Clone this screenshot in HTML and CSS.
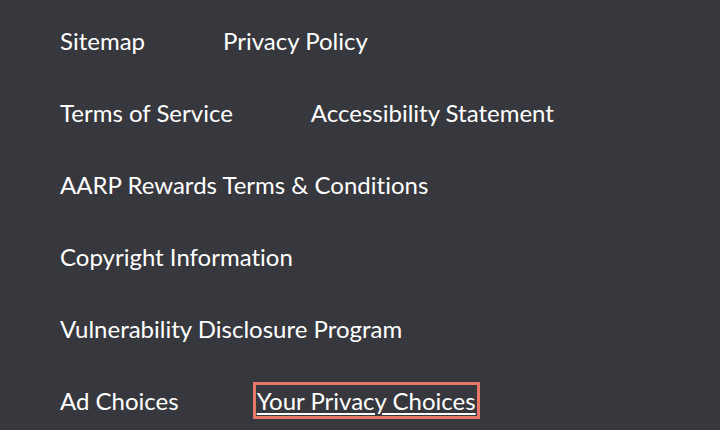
FILE: index.html
```html
<!DOCTYPE html>
<html lang="en">
<head>
    <meta charset="UTF-8">
    <title>Footer Links</title>
    <link rel="stylesheet" href="styles.css">
</head>
<body>
    <nav class="footer-links">
        <ul>
            <li><a href="#">Sitemap</a></li>
            <li><a href="#">Privacy Policy</a></li>
            <li><a href="#">Terms of Service</a></li>
            <li><a href="#">Accessibility Statement</a></li>
            <li><a href="#">AARP Rewards Terms &amp; Conditions</a></li>
            <li><a href="#">Copyright Information</a></li>
            <li><a href="#">Vulnerability Disclosure Program</a></li>
            <li><a href="#">Ad Choices</a></li>
            <li><a href="#" class="focused">Your Privacy Choices</a></li>
        </ul>
    </nav>
</body>
</html>
```

FILE: styles.css
```css
* {
    box-sizing: border-box;
    margin: 0;
    padding: 0;
}

body {
    font-family: Lato, "Noto Sans", sans-serif;
    font-variant-ligatures: none;
    background-color: #37383d;
    color: #fff;
    width: 720px;
    height: 430px;
    overflow: hidden;
}

.footer-links {
    padding: 26px 60px 0 60px;
}
.footer-links ul {
    list-style: none;
    display: flex;
    flex-wrap: wrap;
    row-gap: 42px;
}
.footer-links li {
    margin-right: 78px;
    font-size: 24px;
    line-height: 30px;
}
.footer-links a {
    color: #fff;
    text-decoration: none;
}
.footer-links a.focused {
    text-decoration: underline;
    text-underline-offset: 3px;
    outline: 3px solid #e8776a;
    outline-offset: 1px;
}
```
